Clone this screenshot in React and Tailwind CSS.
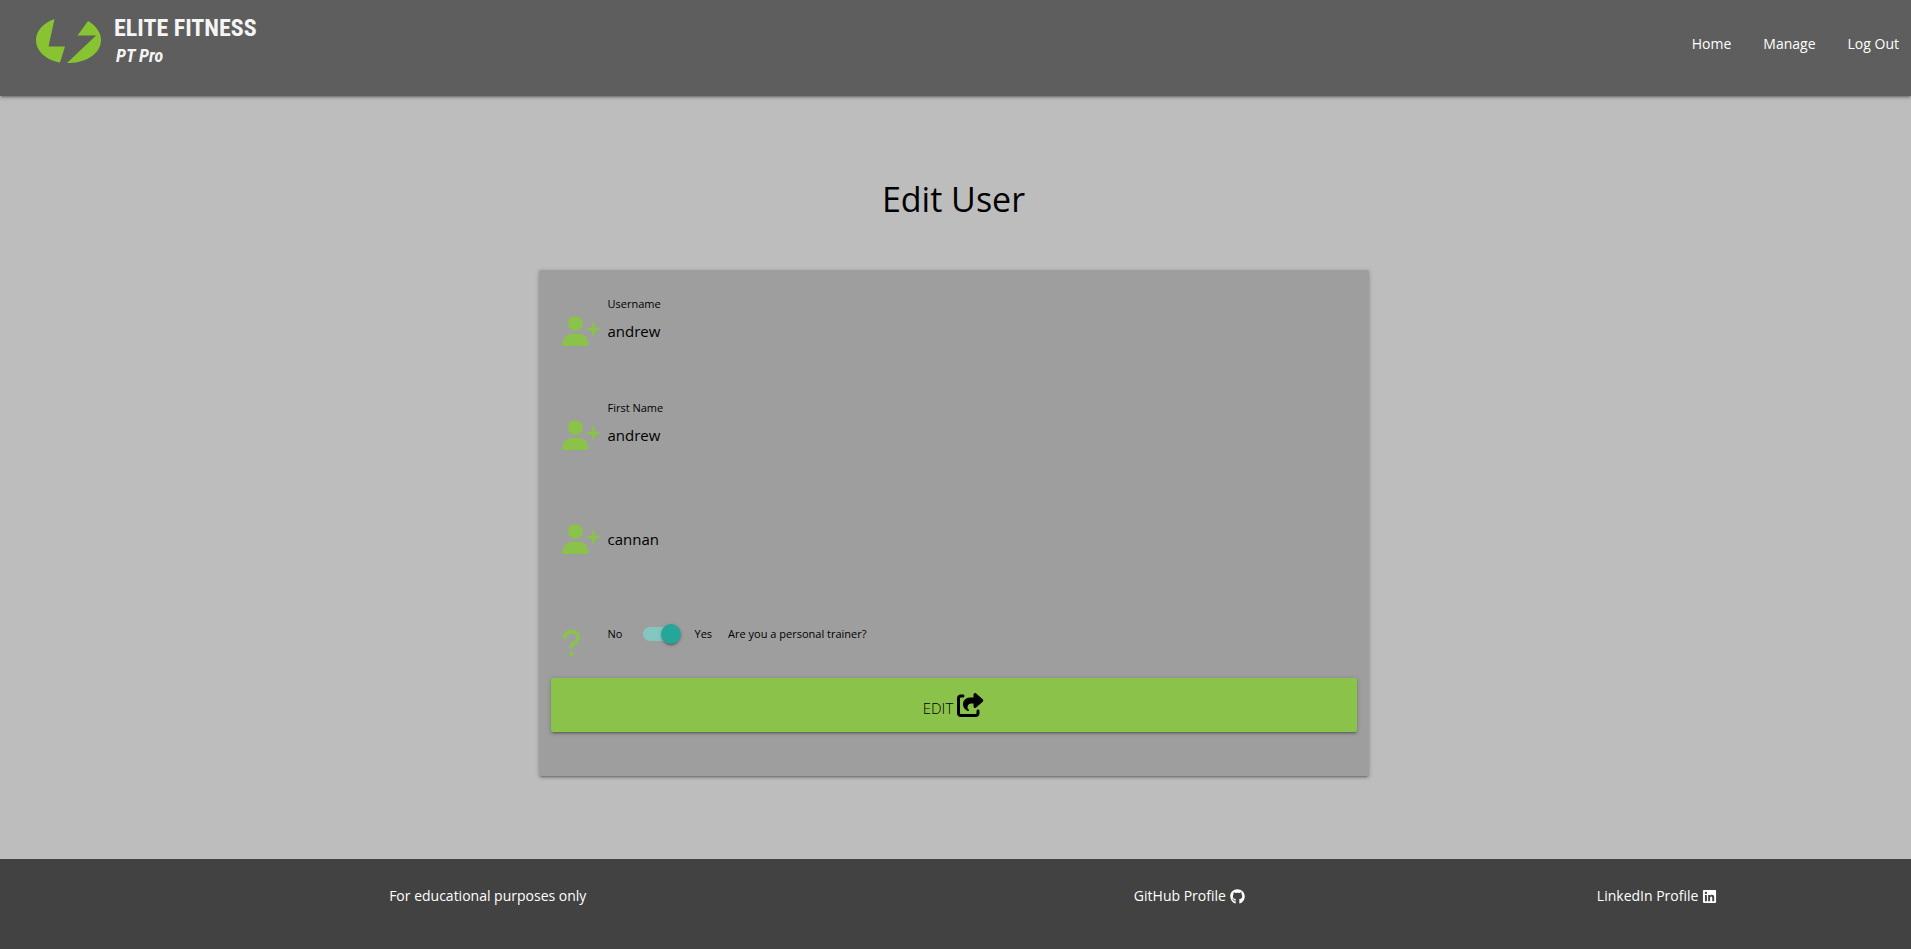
import React from "react";
import {
  FaUserPlus,
  FaQuestion,
  FaShareFromSquare,
  FaGithub,
  FaLinkedin,
} from "react-icons/fa6";

const navLinks = ["Home", "Manage", "Log Out"];

const fields = [
  { id: "username", label: "Username", value: "andrew", showLabel: true },
  { id: "first_name", label: "First Name", value: "andrew", showLabel: true },
  { id: "last_name", label: "Last Name", value: "cannan", showLabel: false },
];

function Logo() {
  return (
    <a href="#home" className="flex items-start gap-[13px] pl-9 text-[#f5f5f5]">
      <svg viewBox="0 0 65 45" className="mt-[18px] h-[45px] w-[65px]" fill="#88c431" aria-hidden="true">
        <path d="M18.5 1C8 4.500 0 12.500 0 22C0 33 10 42 24 44.500L29 28.500H12.500Z" />
        <path d="M52 3L41.500 17.500H60L31 45C50 45.500 65 35.500 65 22C65 14.500 60 7.500 52 3Z" />
      </svg>
      <span className="flex flex-col pt-3 font-['Liberation_Sans_Narrow','Roboto_Condensed','Liberation_Sans',sans-serif] font-bold">
        <span className="text-[24px] leading-8">ELITE FITNESS</span>
        <span className="pl-0.5 text-[18px] leading-6 italic">PT Pro</span>
      </span>
    </a>
  );
}

function Field({ id, label, value, showLabel }) {
  return (
    <div className="flex h-[104px] items-start">
      <div className="w-[46px] shrink-0 pt-5 text-[#8bc34a]">
        <FaUserPlus className="h-[30px] w-[38px]" aria-hidden="true" />
      </div>
      <div className="flex flex-1 flex-col pt-4">
        {showLabel && (
          <label htmlFor={id} className="-mt-4 h-4 text-[11px] leading-4">
            {label}
          </label>
        )}
        <input
          id={id}
          type="text"
          defaultValue={value}
          aria-label={showLabel ? undefined : label}
          className="h-[38px] w-full bg-transparent text-[15px] outline-none"
        />
      </div>
    </div>
  );
}

export default function App() {
  return (
    <div className="flex min-h-screen flex-col bg-[#bdbdbd] font-['Segoe_UI','Open_Sans','Noto_Sans',sans-serif] text-black">
      <header className="flex h-24 items-start justify-between bg-[#5e5e5e] shadow-[0_2px_2px_0_rgba(0,0,0,0.14),0_3px_1px_-2px_rgba(0,0,0,0.12),0_1px_5px_0_rgba(0,0,0,0.2)]">
        <Logo />
        <nav className="flex gap-8 pt-8 pr-3 text-[14px] leading-6 text-white">
          {navLinks.map((name) => (
            <a key={name} href="#nav">
              {name}
            </a>
          ))}
        </nav>
      </header>

      <main className="flex flex-1 flex-col items-center pr-5 pl-4">
        <h1 className="mt-[76px] text-[34px] leading-[54px] font-normal">Edit User</h1>

        <form
          className="mt-11 mb-20 w-full max-w-[830px] rounded-xs bg-[#9e9e9e] px-3 pt-[26px] pb-11 shadow-[0_2px_2px_0_rgba(0,0,0,0.14),0_3px_1px_-2px_rgba(0,0,0,0.12),0_1px_5px_0_rgba(0,0,0,0.2)]"
          onSubmit={(e) => e.preventDefault()}
        >
          <div className="px-[11px]">
            {fields.map((f) => (
              <Field key={f.id} {...f} />
            ))}
            <div className="flex h-[70px] items-start">
              <div className="w-[46px] shrink-0 pt-5 text-[#8bc34a]">
                <FaQuestion className="h-[30px] w-[19px]" aria-hidden="true" />
              </div>
              <div className="flex items-center gap-4 pt-4 text-[11px] leading-5">
                <label htmlFor="trainer" className="flex items-center">
                  <span className="w-[35px]">No</span>
                  <input
                    id="trainer"
                    type="checkbox"
                    defaultChecked
                    className="flex h-3.5 w-9 appearance-none items-center rounded-full bg-[#84c7c1] before:h-5 before:w-5 before:shrink-0 before:rounded-full before:bg-[#26a69a] before:shadow-[0_3px_1px_-2px_rgba(0,0,0,0.2),0_2px_2px_0_rgba(0,0,0,0.14),0_1px_5px_0_rgba(0,0,0,0.12)] checked:before:ml-[18px]"
                  />
                  <span className="pl-4">Yes</span>
                </label>
                <span>Are you a personal trainer?</span>
              </div>
            </div>
          </div>
          <button
            type="submit"
            className="flex h-[54px] w-full items-center justify-center gap-1 rounded-xs bg-[#8bc34a] text-[15px] font-light shadow-[0_2px_2px_0_rgba(0,0,0,0.14),0_3px_1px_-2px_rgba(0,0,0,0.12),0_1px_5px_0_rgba(0,0,0,0.2)]"
          >
            <span className="pt-1.5">EDIT</span>
            <FaShareFromSquare className="h-6 w-[27px]" aria-hidden="true" />
          </button>
        </form>
      </main>

      <footer className="grid h-[90px] grid-cols-[2fr_1fr_1fr] bg-[#424242] px-5 pt-[25px] text-[14px] leading-6 text-white">
        <p className="text-center">For educational purposes only</p>
        <a href="#github" className="flex h-6 items-center justify-center gap-1">
          GitHub Profile <FaGithub className="size-[15px]" aria-hidden="true" />
        </a>
        <a href="#linkedin" className="flex h-6 items-center justify-center gap-1">
          LinkedIn Profile <FaLinkedin className="size-[15px]" aria-hidden="true" />
        </a>
      </footer>
    </div>
  );
}
